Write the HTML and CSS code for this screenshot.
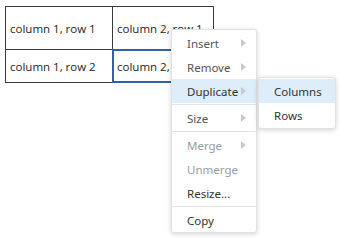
FILE: index.html
```html
<!DOCTYPE html>
<html>
<head>
<meta charset="utf-8">
<link rel="stylesheet" href="styles.css">
</head>
<body>
<div class="page">
  <div class="grid">
    <div class="cell r1">column 1, row 1</div>
    <div class="cell r1">column 2, row 1</div>
    <div class="cell r2">column 1, row 2</div>
    <div class="cell r2 selected">column 2, row 2</div>
  </div>

  <div class="menu main">
    <div class="item sub">Insert<span class="arrow"></span></div>
    <div class="item sub">Remove<span class="arrow"></span></div>
    <div class="item sub active">Duplicate<span class="arrow"></span></div>
    <div class="sep"></div>
    <div class="item sub">Size<span class="arrow"></span></div>
    <div class="sep"></div>
    <div class="item sub disabled">Merge<span class="arrow"></span></div>
    <div class="item disabled">Unmerge</div>
    <div class="item strong">Resize...</div>
    <div class="sep"></div>
    <div class="item strong">Copy</div>
  </div>

  <div class="menu submenu">
    <div class="item strong active">Columns</div>
    <div class="item strong">Rows</div>
  </div>
</div>
</body>
</html>
```

FILE: styles.css
```css
html, body {
  margin: 0;
  padding: 0;
  background: #ffffff;
}

.page {
  position: relative;
  width: 346px;
  height: 238px;
  overflow: hidden;
}

.grid {
  position: absolute;
  left: 5px;
  top: 6px;
  display: grid;
  grid-template-columns: 107px 101px;
  border-left: 1px solid #3a3a3a;
  border-top: 1px solid #3a3a3a;
  font-family: "Open Sans", "Noto Sans", sans-serif;
  font-size: 11.5px;
  color: #1e1e1e;
}

.cell {
  box-sizing: border-box;
  border-right: 1px solid #3a3a3a;
  border-bottom: 1px solid #3a3a3a;
  padding-left: 4px;
  display: flex;
  align-items: center;
  white-space: nowrap;
  overflow: hidden;
}

.r1 { height: 43px; }
.r2 { height: 33px; }

.selected {
  position: relative;
  overflow: visible;
}

.selected::after {
  content: "";
  position: absolute;
  left: -1px;
  top: -1px;
  right: -1px;
  bottom: -1px;
  border: 2px solid #2f62aa;
}

.menu {
  position: absolute;
  box-sizing: border-box;
  background: #ffffff;
  border: 1px solid #e2e2e2;
  border-radius: 3px;
  box-shadow: 0 1px 5px rgba(0, 0, 0, 0.18);
  font-family: "Noto Sans", "Open Sans", sans-serif;
  font-size: 11.5px;
  padding: 1px 0 0 0;
}

.main {
  left: 171px;
  top: 29px;
  width: 86px;
  height: 204px;
}

.submenu {
  left: 258px;
  top: 77px;
  width: 78px;
  height: 52px;
}

.item {
  height: 24px;
  display: flex;
  align-items: center;
  justify-content: space-between;
  padding: 0 10px 0 15px;
  color: #555555;
}

.item.strong { color: #333333; }
.item.active { background: #ddeefa; color: #333333; }
.item.disabled { color: #9a9a9a; }

.arrow {
  width: 0;
  height: 0;
  border-left: 5px solid #c9c9c9;
  border-top: 4.5px solid transparent;
  border-bottom: 4.5px solid transparent;
}

.sep {
  height: 1px;
  background: #e3e3e3;
  margin: 1px 0;
}
```
